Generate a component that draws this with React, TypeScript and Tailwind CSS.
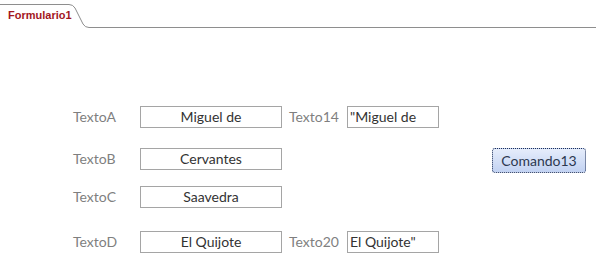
import React from 'react';

const labelCls = 'text-[14px] text-[#7f7f7f] leading-none';
const boxCls =
  'h-[22px] border border-[#a5a5a5] bg-white flex items-center text-[14px] text-[#333333] leading-none';

const Field = ({ label, value, w = 'w-[67px]' }: { label: string; value: string; w?: string }) => (
  <div className="flex items-center">
    <span className={`${labelCls} ${w}`}>{label}</span>
    <div className={`${boxCls} w-[142px] justify-center`}>{value}</div>
  </div>
);

const Extra = ({ label, value }: { label: string; value: string }) => (
  <div className="flex items-center ml-[7px]">
    <span className={`${labelCls} w-[58px]`}>{label}</span>
    <div className={`${boxCls} w-[92px] pl-[2px]`}>{value}</div>
  </div>
);

export default function App() {
  return (
    <div
      className="w-[596px] h-[266px] bg-white overflow-hidden"
      style={{ fontFamily: 'Lato, "Open Sans", sans-serif' }}
    >
      {/* Tab strip */}
      <div className="relative h-[28px]">
        <svg className="absolute inset-0" width="596" height="28">
          <path
            d="M0 4.5 H69 Q73 4.5 75 8 L83 24 Q85 27.5 89 27.5 H596"
            fill="none"
            stroke="#8e8e8e"
            strokeWidth="1"
          />
        </svg>
        <div
          className="relative pl-[8px] pt-[10px] text-[11px] font-bold text-[#a3171e] leading-none"
          style={{ fontFamily: '"Liberation Sans", Arial, sans-serif' }}
        >
          Formulario1
        </div>
      </div>

      {/* Form body */}
      <div className="pl-[73px] pr-[10px]">
        <div className="flex items-center mt-[78px]">
          <Field label="TextoA" value="Miguel de" />
          <Extra label="Texto14" value={'"Miguel de'} />
        </div>
        <div className="flex items-center mt-[20px] h-[22px]">
          <Field label="TextoB" value="Cervantes" />
          <button className="ml-auto mt-[3px] h-[25px] w-[94px] rounded-[3px] border border-dotted border-[#1e2f57] bg-gradient-to-b from-[#e6edfb] to-[#c2d2f2] text-[14px] text-[#2c3850] leading-none">
            Comando13
          </button>
        </div>
        <div className="flex items-center mt-[16px]">
          <Field label="TextoC" value="Saavedra" />
        </div>
        <div className="flex items-center mt-[23px]">
          <Field label="TextoD" value="El Quijote" />
          <Extra label="Texto20" value={'El Quijote"'} />
        </div>
      </div>
    </div>
  );
}
